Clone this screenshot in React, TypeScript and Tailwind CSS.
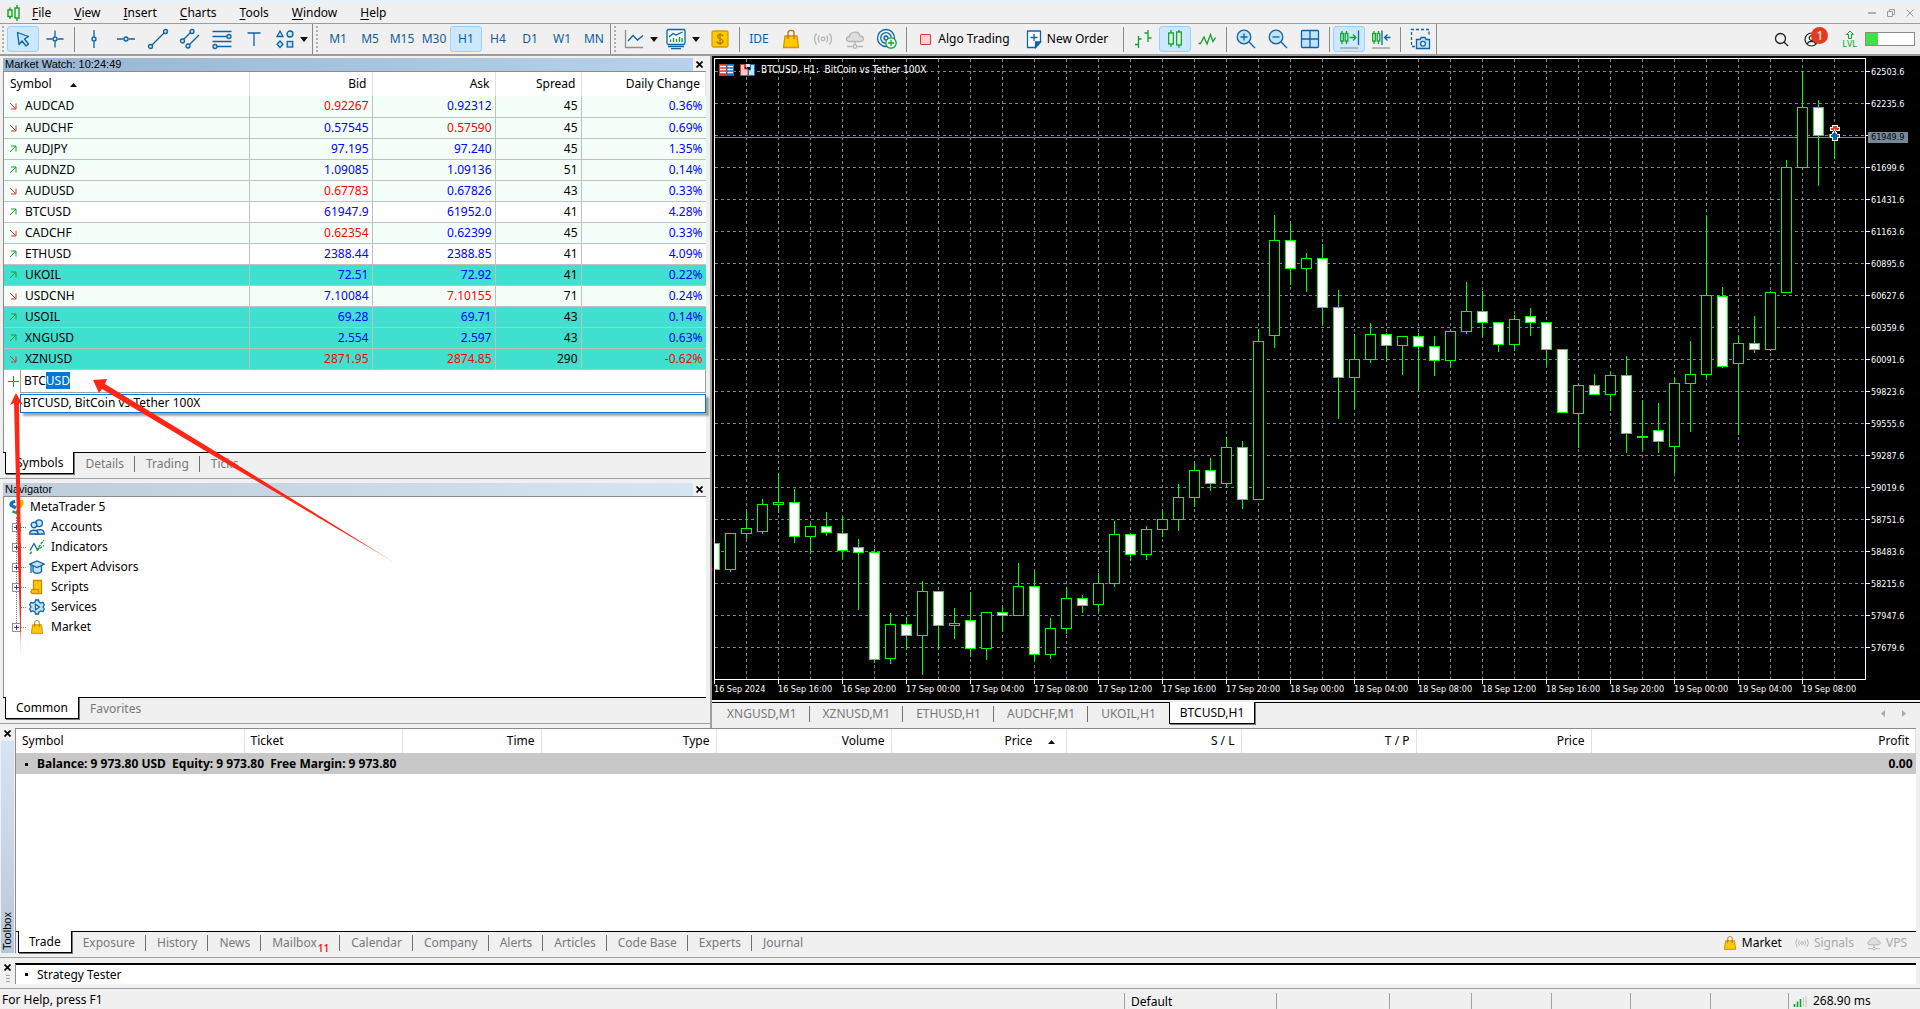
import { useEffect, useRef, type ReactNode } from "react";
import clsx from "clsx";

const BLUE = "#0f62a6";
const SKY = "#bfe4fc";
const GREEN = "#0fa32d";
const GRAY = "#b4b4b4";

/* ---------- icons ---------- */

const Icon = ({ children, size = 24, box = 24 }: { children: ReactNode; size?: number; box?: number }) => (
  <svg width={size} height={size} viewBox={`0 0 ${box} ${box}`} fill="none" stroke={BLUE} strokeWidth="1.3" className="shrink-0" aria-hidden="true">
    {children}
  </svg>
);

const CursorIcon = () => (
  <Icon><path d="M6.5 5.5 17.5 9.5 13.5 12 17.5 17 15 19 11 14 8 17.5Z" fill={SKY} strokeLinejoin="round" /></Icon>
);

const CrosshairIcon = () => (
  <Icon><path d="M12 3.5V9.5M12 14.5V20.5M3.5 12H9.5M14.5 12H20.5" /><circle cx="12" cy="12" r="2" fill={SKY} /></Icon>
);

const VLineIcon = () => (
  <Icon><path d="M12 3V9.5M12 14.5V21" /><circle cx="12" cy="12" r="2" fill={SKY} /></Icon>
);

const HLineIcon = () => (
  <Icon><path d="M3 12H9.5M14.5 12H21" /><circle cx="12" cy="12" r="2" fill={SKY} /></Icon>
);

const TrendIcon = () => (
  <Icon>
    <path d="M6 18 18 6" />
    <circle cx="4.5" cy="19.5" r="2" fill={SKY} /><circle cx="19.5" cy="4.5" r="2" fill={SKY} />
  </Icon>
);

const ChannelIcon = () => (
  <Icon>
    <path d="M5 13 13 5M11 18 21 8" />
    <circle cx="4.5" cy="14" r="2" fill={SKY} /><circle cx="14" cy="4.5" r="2" fill={SKY} /><circle cx="10" cy="19" r="2" fill={SKY} />
  </Icon>
);

const FiboIcon = () => (
  <Icon>
    <path d="M2.5 4.5H21.5M2.5 9.5H17M2.5 14.5H21.5M7 19.5H21.5" />
    <circle cx="19" cy="9.5" r="2" fill={SKY} /><circle cx="5" cy="19.5" r="2" fill={SKY} />
  </Icon>
);

const TextIcon = () => (
  <Icon><path d="M5.5 6H18.5M12 6V19" /></Icon>
);

const ShapesIcon = () => (
  <Icon>
    <path d="M7 4 10 9.5H4ZM7 14 10 17.3 7 20.5 4 17.3Z" fill={SKY} />
    <circle cx="17" cy="7" r="3" fill={SKY} /><rect x="14.2" y="14.5" width="5.5" height="5.5" fill={SKY} />
  </Icon>
);

const LineChartIcon = () => (
  <Icon><path d="M3.5 3V20.5H21" stroke="#8e8e8e" /><path d="M6 14 11 8.5 15.5 13 21 8.5" /></Icon>
);

const IndicatorWindowIcon = () => (
  <Icon>
    <rect x="3" y="2.5" width="18" height="15" rx="1.5" fill="#f2faff" />
    <path d="M5 10 9 6.5 12 8 18.5 5" />
    <path d="M6.5 15V12.5M9.5 15V11M12.5 15V12M15.5 15V10M18 15V11" stroke={GREEN} />
    <path d="M4 19.5H20M7 21.7H17" />
  </Icon>
);

const DollarIcon = () => (
  <Icon>
    <rect x="4" y="4" width="16" height="16" rx="1.5" fill="#ffc800" stroke="#d99a00" />
    <path d="M15 9C14.5 7 9.5 7 9.5 9.5 9.5 12 15 11.5 15 14.3 15 17 9.5 17 9 14.5M12 6V18" stroke="#b27700" />
  </Icon>
);

const BagIcon = ({ size = 24 }: { size?: number }) => (
  <Icon size={size}>
    <path d="M6 9H18L19.5 20.5H4.5Z" fill="#ffc800" stroke="#d39200" />
    <path d="M9 12V6C9 2.500 15 2.500 15 6V12" stroke="#b27700" />
  </Icon>
);

const SignalIcon = ({ size = 24 }: { size?: number }) => (
  <Icon size={size}>
    <g stroke={GRAY}>
      <circle cx="12" cy="12" r="1.8" />
      <path d="M8.5 8.5Q6 12 8.5 15.5M5.5 6.5Q1.5 12 5.5 17.5M15.5 8.5Q18 12 15.5 15.5M18.5 6.5Q22.5 12 18.5 17.5" />
    </g>
  </Icon>
);

const CloudIcon = ({ size = 24 }: { size?: number }) => (
  <Icon size={size}>
    <g stroke={GRAY}>
      <path d="M6.5 14.5C2.5 14.5 2.5 9.8 6.5 9.5 7 4 16 3.5 17 9 21.5 9 21.5 14.5 17.5 14.5Z" fill="#dedede" />
      <path d="M12 14.5V18M4 19.5H9.5M14.5 19.5H20" /><circle cx="12" cy="19.5" r="1.8" />
    </g>
  </Icon>
);

const CommunityIcon = () => (
  <Icon>
    <circle cx="11" cy="11" r="8.5" /><circle cx="11" cy="11" r="5.3" /><circle cx="11" cy="11" r="2" fill={SKY} />
    <circle cx="16" cy="16" r="5.2" fill="#fff" stroke={GREEN} />
    <path d="M12.8 16H19.2M16 12.8V19.2" stroke={GREEN} />
  </Icon>
);

const NewOrderIcon = () => (
  <Icon>
    <path d="M5.5 4H18.5V15L13.5 20.5H5.5Z" fill="#fff" strokeLinejoin="round" />
    <path d="M18.5 15H13.5V20.5Z" fill={BLUE} /><path d="M12 7V14M8.5 10.5H15.5" />
  </Icon>
);

const BarsIcon = () => (
  <Icon><path d="M7.5 9V21M4 17.5H7.5M7.5 12H10.5M17 3V15M13.5 6H17M17 11H20.5" stroke={GREEN} /></Icon>
);

const CandlesIcon = () => (
  <Icon>
    <path d="M8 3V6M8 17V20M16 3V5M16 18V21" stroke={GREEN} />
    <rect x="5.7" y="6" width="4.6" height="11" stroke={GREEN} fill="#eafbe9" /><rect x="13.7" y="5" width="4.6" height="13" stroke={GREEN} fill="#eafbe9" />
  </Icon>
);

const ZigzagIcon = () => (
  <Icon><path d="M3.500 16.500H5.500L9 10 12 17 15.500 7.500 18 14.500 20.500 10.500" stroke={GREEN} /></Icon>
);

const ZoomIcon = ({ plus }: { plus?: boolean }) => (
  <Icon>
    <circle cx="10" cy="10" r="6.8" fill={SKY} /><path d="M15 15 21 21" />
    <path d={plus ? "M6.5 10H13.5M10 6.5V13.5" : "M6.5 10H13.5"} />
  </Icon>
);

const TileIcon = () => (
  <Icon><rect x="3.5" y="3.5" width="17" height="17" rx="1" fill={SKY} /><path d="M12 3.5V20.5M3.5 12H20.5" /></Icon>
);

const MiniCandles = () => (
  <g stroke={GREEN}>
    <path d="M5 4V6.5M5 14V17M9.5 4V6.5M9.5 14V17" /><rect x="3.7" y="6.5" width="2.6" height="7.5" /><rect x="8.2" y="6.5" width="2.6" height="7.5" />
  </g>
);

const ScrollIcon = () => (
  <Icon>
    <MiniCandles />
    <path d="M12.5 10.5H18.5M16 7.5 19 10.5 16 13.5" stroke={GREEN} /><path d="M21.5 3.5V18" /><path d="M3 21H21" stroke="#9a9a9a" />
  </Icon>
);

const ShiftIcon = () => (
  <Icon>
    <MiniCandles />
    <path d="M13 3.5V18M21.5 10.5H16M18.5 7.5 15.5 10.5 18.5 13.5" /><path d="M3 21H21" stroke="#9a9a9a" />
  </Icon>
);

const CameraIcon = () => (
  <Icon>
    <path d="M7 19.5H3.5V2.5H21V9" strokeDasharray="3 2" />
    <path d="M8.5 12.5H12L13.2 10.5H17L18.2 12.5H21.5V21.5H8.5Z" fill={SKY} /><circle cx="15" cy="16.8" r="2.4" fill="#fff" />
  </Icon>
);

const UsersIcon = () => (
  <Icon size={16} box={16}>
    <circle cx="10" cy="4.2" r="3.4" fill={SKY} /><path d="M6 15C6 9.500 15 9 15.300 15Z" fill={SKY} />
    <circle cx="5" cy="6" r="2.800" fill={SKY} /><path d="M.7 15C.7 10 9 10 9.300 15Z" fill={SKY} />
  </Icon>
);

const IndicatorsIcon = () => (
  <Icon size={16} box={16}>
    <path d="M1 11.500 5 4.500 8.500 11 10 9" /><path d="M1 15 3 12.500M8 12 10 8 12.500 4 15 1M10.500 9.500 15 6.500" stroke={GREEN} strokeDasharray="3 1" />
  </Icon>
);

const ExpertIcon = () => (
  <Icon size={16} box={16}>
    <path d="M4 6V12.5C6 15 10.500 15 12.500 12.500V6" fill={SKY} /><path d="M.8 5.200 8 2 15.300 5.200 8 8.500Z" fill={SKY} /><path d="M2 6V14" />
  </Icon>
);

const ScriptIcon = () => (
  <Icon size={16} box={16}>
    <path d="M4.500 1.500H12.500V14.500H3.500C1.500 14.500 1.500 10.500 3.500 10.500H4.500Z" fill="#ffc800" stroke="#c98c00" /><path d="M4.500 10.500H9.500V14" stroke="#c98c00" />
  </Icon>
);

const GearIcon = () => (
  <Icon size={16} box={16}>
    <path d="M6.500 1H9.500L10 3 12 4 14 3.300 15.300 6 14 8 15.300 10 14 12.700 12 12 10 13 9.500 15H6.500L6 13 4 12 2 12.700.7 10 2 8 .7 6 2 3.300 4 4 6 3Z" fill={SKY} />
    <path d="M6.500 5.300V10.700L10.500 8Z" fill="#fff" />
  </Icon>
);

const LogoIcon = () => (
  <svg width="16" height="16" viewBox="0 0 16 16" className="shrink-0" aria-hidden="true">
    <path d="M7 1C3 1 0 4 2 7.500L7 10.500 9 7.500 5 5.500C5 4.500 6.500 4 7.500 4Z" fill="#1273c4" />
    <path d="M8 1H15C17 5 15 8.500 11 9.500L8 6.500 11.500 5Z" fill="#f5b800" />
    <path d="M9 10 12 10.500 9 15.500 4 13.500 5 11 8 12.500Z" fill="#18a83c" />
  </svg>
);

const Caret = () => (
  <svg width="8" height="5" viewBox="0 0 8 5" className="shrink-0" aria-hidden="true"><path d="M0 0H8L4 5Z" fill="#111" /></svg>
);

const SortMark = () => (
  <svg width="7" height="4" viewBox="0 0 7 4" className="inline-block align-top" aria-hidden="true"><path d="M0 4H7L3.500 0Z" fill="#111" /></svg>
);

/* ---------- top bars ---------- */

const menus = ["File", "View", "Insert", "Charts", "Tools", "Window", "Help"];

const MenuBar = () => (
  <header className="border-b border-[#9c9c9c] bg-[#f0f0f0]">
    <div className="h-[3px] bg-[#e8f3f9]" />
    <div className="flex h-5 items-center justify-between pl-[7px] pr-[6px]">
      <nav className="flex items-center">
        <svg width="14" height="16" viewBox="0 0 14 16" fill="none" stroke="#0aa51e" strokeWidth="1.400" className="mr-[11px]" aria-hidden="true">
          <path d="M3 2.500V5M3 11.500V14M10 0V3M10 13V16" /><rect x="1" y="5" width="4" height="6.500" /><rect x="8" y="3" width="4" height="10" />
        </svg>
        <div className="flex gap-[23px]">
          {menus.map((name) => (
            <button key={name} className="text-[12px]"><span className="underline underline-offset-2">{name[0]}</span>{name.slice(1)}</button>
          ))}
        </div>
      </nav>
      <div className="flex gap-[11px] text-[#9a9a9a]">
        <button aria-label="Minimize"><svg width="8" height="8" viewBox="0 0 8 8" stroke="currentColor"><path d="M0 4H8" strokeWidth="1.500" /></svg></button>
        <button aria-label="Restore"><svg width="8" height="8" viewBox="0 0 8 8" fill="none" stroke="currentColor"><path d="M.5 2.500H5.500V7.500H.5ZM2.500 2V.5H7.500V5.500H6" /></svg></button>
        <button aria-label="Close"><svg width="8" height="8" viewBox="0 0 8 8" stroke="currentColor"><path d="M.5.5 7.500 7.500M7.500.5.5 7.500" /></svg></button>
      </div>
    </div>
  </header>
);

const ToolButton = ({ label, active, children, className }: { label: string; active?: boolean; children: ReactNode; className?: string }) => (
  <button aria-label={label} className={clsx("flex h-[26px] shrink-0 items-center justify-center rounded-[3px] border", className ?? "w-[32px]", active ? "border-[#99d1ff] bg-[#cce8ff]" : "border-transparent")}>
    {children}
  </button>
);

const Separator = () => <span className="mx-[3px] h-[25px] w-px shrink-0 bg-[#8a8a8a]" />;
const Grip = () => <span className="h-[26px] w-0 shrink-0 border-l-2 border-dotted border-[#b0b0b0]" />;

const timeframes = ["M1", "M5", "M15", "M30", "H1", "H4", "D1", "W1", "MN"];

const Toolbar = () => (
  <div className="flex h-[32px] items-center border-b-2 border-[#9c9c9c] bg-[#f0f0f0] pl-[2px]">
    <Grip />
    <div className="flex items-center pl-[3px]">
      <ToolButton label="Cursor" active><CursorIcon /></ToolButton>
      <ToolButton label="Crosshair"><CrosshairIcon /></ToolButton>
      <Separator />
      <ToolButton label="Vertical line"><VLineIcon /></ToolButton>
      <ToolButton label="Horizontal line"><HLineIcon /></ToolButton>
      <ToolButton label="Trend line"><TrendIcon /></ToolButton>
      <ToolButton label="Channel"><ChannelIcon /></ToolButton>
      <ToolButton label="Fibonacci"><FiboIcon /></ToolButton>
      <ToolButton label="Text"><TextIcon /></ToolButton>
      <ToolButton label="Shapes" className="w-[40px] gap-[3px]"><ShapesIcon /><Caret /></ToolButton>
    </div>
    <span className="ml-[2px] h-[30px] w-px bg-[#8a8a8a]" />
    <span className="w-[3px]" />
    <Grip />
    <div className="flex items-center pl-[4px]">
      {timeframes.map((tf) => (
        <ToolButton key={tf} label={tf} active={tf === "H1"}><span className="text-[12px] text-[#0f5c9c]">{tf}</span></ToolButton>
      ))}
    </div>
    <span className="h-[30px] w-px bg-[#8a8a8a]" />
    <span className="w-[3px]" />
    <Grip />
    <div className="flex items-center pl-[3px]">
      <ToolButton label="Chart type" className="w-[41px] gap-[4px]"><LineChartIcon /><Caret /></ToolButton>
      <ToolButton label="Indicators" className="w-[44px] gap-[4px]"><IndicatorWindowIcon /><Caret /></ToolButton>
      <ToolButton label="Quotes" className="w-[32px]"><DollarIcon /></ToolButton>
      <Separator />
      <ToolButton label="IDE"><span className="text-[12px] text-[#0f5c9c]">IDE</span></ToolButton>
      <ToolButton label="Market"><BagIcon /></ToolButton>
      <ToolButton label="Signals"><SignalIcon /></ToolButton>
      <ToolButton label="VPS"><CloudIcon /></ToolButton>
      <ToolButton label="Community"><CommunityIcon /></ToolButton>
      <Separator />
      <ToolButton label="Algo Trading" className="w-[110px] gap-[7px]">
        <span className="size-[11px] rounded-[1px] border border-[#dc3b33] bg-[#ffcfcb]" />
        <span className="whitespace-nowrap text-[12px]">Algo Trading</span>
      </ToolButton>
      <ToolButton label="New Order" className="mr-[10px] w-[90px] gap-[1px]">
        <NewOrderIcon /><span className="whitespace-nowrap text-[12px]">New Order</span>
      </ToolButton>
      <Separator />
      <ToolButton label="Bar chart"><BarsIcon /></ToolButton>
      <ToolButton label="Candlesticks" active><CandlesIcon /></ToolButton>
      <ToolButton label="Line chart"><ZigzagIcon /></ToolButton>
      <Separator />
      <ToolButton label="Zoom in"><ZoomIcon plus /></ToolButton>
      <ToolButton label="Zoom out"><ZoomIcon /></ToolButton>
      <ToolButton label="Tile windows"><TileIcon /></ToolButton>
      <Separator />
      <ToolButton label="Auto scroll" active><ScrollIcon /></ToolButton>
      <ToolButton label="Chart shift"><ShiftIcon /></ToolButton>
      <Separator />
      <ToolButton label="Screenshot"><CameraIcon /></ToolButton>
    </div>
    <span className="h-[30px] w-px bg-[#8a8a8a]" />
    <div className="ml-auto flex items-center pr-[5px]">
      <button aria-label="Search" className="mr-[15px]">
        <svg width="15" height="15" viewBox="0 0 15 15" fill="none" stroke="#222" strokeWidth="1.300"><circle cx="6.500" cy="6.500" r="5" /><path d="M10 10 14 14" /></svg>
      </button>
      <button aria-label="Profile" className="relative mr-[14px] flex h-[22px] w-[24px] items-center">
        <svg width="15" height="15" viewBox="0 0 15 15" fill="none" stroke="#222" strokeWidth="1.200"><circle cx="7.500" cy="7.500" r="6.500" /><circle cx="7.500" cy="6" r="2.300" /><path d="M3.500 12C4 8.500 11 8.500 11.500 12" /></svg>
        <span className="absolute -top-px right-0 flex size-[17px] items-center justify-center rounded-full bg-[#e33b1e] text-[12px] leading-none text-white">1</span>
      </button>
      <button aria-label="Level" className="mr-[8px] flex flex-col items-center">
        <svg width="10" height="9" viewBox="0 0 10 9" fill="none" stroke={GREEN}><path d="M5 1 8.500 4.500H6.500V8.500H3.500V4.500H1.500Z" /></svg>
        <span className="text-[9px] leading-[9px] text-[#0fa32d]">LVL</span>
      </button>
      <div className="h-[14px] w-[50px] border border-[#8a8a8a] bg-white"><div className="h-full w-[12px] bg-[#43e043]" /></div>
    </div>
  </div>
);

/* ---------- docked panels ---------- */

const CloseButton = ({ label }: { label: string }) => (
  <button aria-label={label}>
    <svg width="7" height="7" viewBox="0 0 7 7" stroke="#000" strokeWidth="1.700" aria-hidden="true"><path d="M.5.5 6.500 6.500M6.500.5.5 6.500" /></svg>
  </button>
);

const PanelTitle = ({ title, active }: { title: string; active?: boolean }) => (
  <div className="flex h-[14px] items-center">
    <h2 className={clsx("h-[13px] flex-1 bg-linear-to-r pl-[2px] font-['Liberation_Sans',sans-serif] text-[11px] leading-[13px]", active ? "from-[#99b4d1] to-[#b9d1ea]" : "from-[#bfcddb] to-[#d7e4f2]")}>{title}</h2>
    <span className="flex w-[13px] justify-center"><CloseButton label={`Close ${title}`} /></span>
  </div>
);

const Tabs = ({ tabs, active, wide, children }: { tabs: string[]; active: string; wide?: boolean; children?: ReactNode }) => (
  <div className="flex h-[22px] shrink-0 border-t border-black bg-[#f0f0f0] pl-[2px]">
    {tabs.map((tab, i) => (
      <button
        key={tab}
        className={clsx(
          "relative flex items-center text-[12px]",
          tab === active ? "-mt-px h-[22px] border-x border-b border-black bg-white px-[10px] shadow-[1px_1px_0_#777]" : "text-[#787878]",
          tab !== active && (wide ? "px-[13px]" : "px-[11px]")
        )}
      >
        {tab}
        {tab === "Mailbox" && <sub className="ml-px mt-[6px] text-[10px] font-semibold leading-none text-[#f01818]">11</sub>}
        {tab !== active && i < tabs.length - 1 && tabs[i + 1] !== active && <span className="absolute right-0 top-[3px] h-[16px] w-px bg-[#707070]" />}
      </button>
    ))}
    {children}
  </div>
);

type Quote = [symbol: string, up: boolean, bid: string, ask: string, spread: string, change: string, colors: string];

// colors: bid / ask / change, r = red, b = blue
const quotes: Quote[] = [
  ["AUDCAD", false, "0.92267", "0.92312", "45", "0.36%", "rbb"],
  ["AUDCHF", false, "0.57545", "0.57590", "45", "0.69%", "brb"],
  ["AUDJPY", true, "97.195", "97.240", "45", "1.35%", "bbb"],
  ["AUDNZD", true, "1.09085", "1.09136", "51", "0.14%", "bbb"],
  ["AUDUSD", false, "0.67783", "0.67826", "43", "0.33%", "rbb"],
  ["BTCUSD", true, "61947.9", "61952.0", "41", "4.28%", "bbb"],
  ["CADCHF", false, "0.62354", "0.62399", "45", "0.33%", "rbb"],
  ["ETHUSD", true, "2388.44", "2388.85", "41", "4.09%", "bbb"],
  ["UKOIL", true, "72.51", "72.92", "41", "0.22%", "bbb"],
  ["USDCNH", false, "7.10084", "7.10155", "71", "0.24%", "brb"],
  ["USOIL", true, "69.28", "69.71", "43", "0.14%", "bbb"],
  ["XNGUSD", true, "2.554", "2.597", "43", "0.63%", "bbb"],
  ["XZNUSD", false, "2871.95", "2874.85", "290", "-0.62%", "rrr"],
];
const turquoise = ["UKOIL", "USOIL", "XNGUSD", "XZNUSD"];
const plain = ["BTCUSD", "ETHUSD"];

const tone = (c: string) => (c === "r" ? "text-[#f00]" : "text-[#00f]");

const Direction = ({ up }: { up: boolean }) => (
  <svg width="8" height="8" viewBox="0 0 8 8" fill="none" stroke={up ? GREEN : "#d8352c"} className="shrink-0" aria-hidden="true">
    <path d={up ? "M1 7 7 1M2 1H7V6.500" : "M1 1 7 7M2 7H7V1.500"} />
  </svg>
);

const MarketWatch = () => {
  const input = useRef<HTMLInputElement>(null);

  useEffect(() => {
    input.current?.focus();
    input.current?.setSelectionRange(3, 6);
  }, []);

  return (
    <section className="pl-[3px] pr-[4px] pt-[1px]">
      <PanelTitle title="Market Watch: 10:24:49" active />
      <div className="h-[381px] border-l border-t border-[#8c8c8c] bg-white">
        <table className="w-full table-fixed border-collapse text-[12px]">
          <thead>
            <tr className="h-[24px] text-right">
              <th className="w-[245px] border-r border-[#e2e2e2] p-0 pl-[6px] text-left font-normal">Symbol <span className="ml-[15px] inline-block align-middle leading-[4px]"><SortMark /></span></th>
              <th className="w-[123px] border-r border-[#e2e2e2] p-0 pr-[5px] font-normal">Bid</th>
              <th className="w-[123px] border-r border-[#e2e2e2] p-0 pr-[5px] font-normal">Ask</th>
              <th className="w-[86px] border-r border-[#e2e2e2] p-0 pr-[5px] font-normal">Spread</th>
              <th className="border-r border-[#e2e2e2] p-0 pr-[5px] font-normal">Daily Change</th>
            </tr>
          </thead>
          <tbody>
            {quotes.map(([symbol, up, bid, ask, spread, change, colors]) => (
              <tr
                key={symbol}
                className={clsx("h-[21px] border-b border-[#c0c0c0] text-right", turquoise.includes(symbol) ? "bg-[#40e0d0]" : plain.includes(symbol) ? "bg-white" : "bg-[#f5fffa]")}
              >
                <td className="border-r border-[#c0c0c0] p-0"><span className="flex items-center gap-[8px] pl-[5px] leading-[20px]"><Direction up={up} />{symbol}</span></td>
                <td className={clsx("border-r border-[#c0c0c0] p-0 pr-[3px] leading-[20px]", tone(colors[0]))}>{bid}</td>
                <td className={clsx("border-r border-[#c0c0c0] p-0 pr-[3px] leading-[20px]", tone(colors[1]))}>{ask}</td>
                <td className="border-r border-[#c0c0c0] p-0 pr-[3px] leading-[20px]">{spread}</td>
                <td className={clsx("p-0 pr-[3px] leading-[20px]", tone(colors[2]))}>{change}</td>
              </tr>
            ))}
          </tbody>
        </table>
        <div className="relative flex h-[23px] items-center">
          <svg width="16" height="11" viewBox="0 0 16 11" stroke={GREEN} className="shrink-0" aria-hidden="true"><path d="M4 5.500H15M9.500 0V11" /></svg>
          <input
            ref={input}
            aria-label="Add symbol"
            defaultValue="BTCUSD"
            className="h-full flex-1 border border-t-0 border-[#a0a0a0] bg-white pl-[3px] text-[12px] caret-transparent outline-none selection:bg-[#0078d7] selection:text-white"
          />
          <div className="absolute left-[16px] right-0 top-[24px] flex h-[19px] items-center border border-[#0078d7] bg-white pl-[2px] text-[12px] shadow-[3px_3px_2px_rgba(0,0,0,0.35)]">
            BTCUSD, BitCoin vs Tether 100X
          </div>
        </div>
      </div>
      <Tabs tabs={["Symbols", "Details", "Trading", "Ticks"]} active="Symbols" />
    </section>
  );
};

const tree = [
  { name: "Accounts", icon: <UsersIcon /> },
  { name: "Indicators", icon: <IndicatorsIcon /> },
  { name: "Expert Advisors", icon: <ExpertIcon /> },
  { name: "Scripts", icon: <ScriptIcon /> },
  { name: "Services", icon: <GearIcon />, leaf: true },
  { name: "Market", icon: <BagIcon size={18} /> },
];

const Navigator = () => (
  <section className="mb-[4px] mt-[4px] flex flex-1 flex-col border-y border-[#a0a0a0] pb-[4px] pl-[3px] pr-[4px] pt-[3px]">
    <PanelTitle title="Navigator" />
    <div className="flex-1 border-l border-t border-[#8c8c8c] bg-white text-[12px]">
      <div className="flex h-[20px] items-center gap-[6px] pl-[4px]"><LogoIcon />MetaTrader 5</div>
      <ul className="relative">
        <li aria-hidden="true" className="absolute bottom-[10px] left-[12px] top-0 border-l border-dotted border-[#808080]" />
        {tree.map(({ name, icon, leaf }) => (
          <li key={name} className="relative flex h-[20px] items-center pl-[8px]">
            {leaf ? (
              <span className="w-[9px]" />
            ) : (
              <button aria-label={`Expand ${name}`}>
                <svg width="9" height="9" viewBox="0 0 9 9" fill="#fff" stroke="#909090" className="block"><rect x=".5" y=".5" width="8" height="8" /><path d="M2 4.500H7M4.500 2V7" stroke="#27408b" /></svg>
              </button>
            )}
            <span className="mr-[2px] w-[5px] border-t border-dotted border-[#808080]" />
            <span className="flex w-[18px] justify-center">{icon}</span>
            <span className="ml-[5px]">{name}</span>
          </li>
        ))}
      </ul>
    </div>
    <Tabs tabs={["Common", "Favorites"]} active="Common" />
  </section>
);

/* ---------- chart ---------- */

// one entry an hour: high, body top, body bottom, low, filled
type Candle = [number, number, number, number, 0 | 1];

const candles: Candle[] = [
  [485, 485, 511, 511, 1], [474, 475, 511, 513, 0], [452, 470, 475, 480, 0], [440, 446, 473, 475, 0],
  [414, 444, 446, 454, 0], [430, 444, 478, 484, 1], [464, 468, 478, 495, 0], [453, 468, 474, 477, 1],
  [457, 475, 492, 500, 1], [480, 489, 494, 551, 1], [490, 494, 601, 604, 1], [554, 566, 600, 605, 0],
  [558, 566, 577, 591, 1], [522, 533, 577, 616, 0], [532, 533, 567, 591, 1], [549, 565, 567, 580, 0],
  [533, 562, 590, 598, 1], [553, 554, 590, 601, 0], [548, 554, 557, 573, 1], [504, 528, 557, 557, 0],
  [512, 528, 596, 602, 1], [559, 570, 596, 600, 0], [528, 540, 570, 575, 0], [536, 540, 547, 554, 1],
  [514, 525, 546, 553, 0], [462, 476, 525, 528, 0], [475, 476, 496, 502, 1], [467, 471, 496, 501, 0],
  [452, 461, 471, 478, 0], [425, 439, 461, 472, 0], [403, 412, 439, 448, 0], [399, 412, 425, 432, 1],
  [378, 389, 425, 429, 0], [382, 389, 441, 450, 1], [270, 283, 441, 441, 0], [156, 182, 277, 289, 0],
  [165, 182, 210, 226, 1], [194, 200, 210, 233, 0], [185, 200, 249, 266, 1], [231, 249, 319, 360, 1],
  [275, 301, 319, 350, 0], [264, 276, 301, 304, 0], [274, 276, 287, 302, 1], [277, 278, 287, 316, 0],
  [274, 278, 288, 331, 1], [277, 288, 302, 317, 1], [270, 273, 302, 308, 0], [223, 253, 273, 275, 0],
  [232, 253, 264, 278, 1], [263, 264, 286, 293, 1], [256, 261, 286, 292, 0], [249, 258, 264, 277, 1],
  [264, 264, 291, 306, 1], [291, 291, 354, 354, 1], [324, 327, 355, 389, 0], [315, 327, 336, 336, 1],
  [313, 317, 336, 352, 0], [297, 317, 375, 394, 1], [341, 378, 379, 392, 0], [344, 372, 383, 394, 1],
  [319, 325, 388, 414, 0], [282, 316, 325, 373, 0], [156, 237, 316, 319, 0], [228, 238, 308, 309, 1],
  [277, 285, 305, 376, 0], [257, 285, 291, 294, 1], [232, 234, 291, 292, 0], [101, 109, 234, 234, 0],
  [12, 49, 109, 110, 0], [41, 49, 77, 127, 1], [76, 76, 79, 100, 0],
];

const hours = [
  "16 Sep 2024", "16 Sep 16:00", "16 Sep 20:00", "17 Sep 00:00", "17 Sep 04:00", "17 Sep 08:00",
  "17 Sep 12:00", "17 Sep 16:00", "17 Sep 20:00", "18 Sep 00:00", "18 Sep 04:00", "18 Sep 08:00",
  "18 Sep 12:00", "18 Sep 16:00", "18 Sep 20:00", "19 Sep 00:00", "19 Sep 04:00", "19 Sep 08:00",
];
const prices = Array.from({ length: 19 }, (_, i) => (62503.6 - i * 268).toFixed(1));

const Plot = () => (
  <svg className="absolute inset-0 h-full w-full" shapeRendering="crispEdges" role="img" aria-label="BTCUSD hourly candles">
    <g stroke="#778899" strokeDasharray="3 3">
      {Array.from({ length: 60 }, (_, i) => <line key={i} x1={31.5 + i * 32} x2={31.5 + i * 32} y1="0" y2="100%" />)}
      {prices.map((p, i) => <line key={p} x1="0" x2="100%" y1={12.5 + i * 32} y2={12.5 + i * 32} />)}
    </g>
    <line x1="0" x2="100%" y1="78.5" y2="78.5" stroke="#778899" />
    {candles.map(([high, top, bottom, low, filled], i) => {
      const x = i * 16 - 0.5;
      return (
        <g key={i} stroke="#0f0">
          <line x1={x} x2={x} y1={high} y2={low} />
          <rect x={x - 5} y={top - 0.5} width="10" height={bottom - top} fill={filled ? "#fff" : "#000"} />
        </g>
      );
    })}
    <g stroke="#fff" transform="translate(1119 0)">
      <path d="M-2 66H3V68H5V71H3L.5 74-2 71H-4V68H-2Z" fill="#e33b1e" />
      <path d="M.5 71 3 75H5V78H3V81H-2V78H-4V75H-2Z" fill="#0f62a6" />
    </g>
  </svg>
);

const Chart = () => (
  <section className="flex min-w-0 flex-1 flex-col border-l-2 border-[#a0a0a0]">
    <div className="flex min-h-0 flex-1 bg-black pl-[2px] pr-[1px] pt-[2px] font-['DejaVu_Sans_Condensed','DejaVu_Sans',sans-serif] text-[9px] text-white">
      <div className="flex min-w-0 flex-1 flex-col">
        <div className="relative flex-1 overflow-hidden border border-white">
          <Plot />
          <div className="relative flex items-center pl-[4px] pt-[3px]">
            <svg width="15" height="12" viewBox="0 0 15 12" aria-hidden="true">
              <path d="M0 0H8V12H0Z" fill="#e0352c" /><path d="M7.500 0H15V12H7.500Z" fill="#1273c4" /><path d="M1 2.500H7M1 5.500H7M1 8.500H7M8.500 2.500H14M8.500 5.500H14M8.500 8.500H14" stroke="#fff" strokeWidth="1.500" />
            </svg>
            <svg width="15" height="12" viewBox="0 0 15 12" className="ml-[6px]" aria-hidden="true">
              <path d="M.5.5H4.500V5H8V11.500H.5Z" fill="#ffc9c4" stroke="#e0352c" /><path d="M10.500.5H14.500V11.500H8.500V6H10.500Z" fill="#bfe4fc" stroke="#1273c4" /><path d="M5.500 0H10V3H5.500Z" fill="#ddd" />
            </svg>
            <h1 className="ml-[6px] whitespace-pre text-[10px]">BTCUSD, H1:  BitCoin vs Tether 100X</h1>
          </div>
        </div>
        <div className="flex h-[20px] overflow-hidden">
          {hours.map((h) => (
            <div key={h} className="w-[64px] shrink-0 whitespace-nowrap">
              <div className="h-[4px] border-l border-white" />
              <div className="leading-[10px]">{h}</div>
            </div>
          ))}
        </div>
      </div>
      <div className="relative w-[53px] shrink-0 overflow-hidden">
        {prices.map((p) => (
          <div key={p} className="flex h-[32px] items-start">
            <div className="flex h-[27px] items-center"><span className="mr-px h-px w-[4px] bg-white" />{p !== "61967.6" && p}</div>
          </div>
        ))}
        <div className="absolute left-[2px] top-[74px] h-[11px] w-[40px] bg-[#778899] pl-[3px] leading-[11px] text-black">61949.9</div>
      </div>
    </div>
    <div className="flex h-[28px] flex-col bg-[#f0f0f0] pt-[2px]">
      <Tabs tabs={["XNGUSD,M1", "XZNUSD,M1", "ETHUSD,H1", "AUDCHF,M1", "UKOIL,H1", "BTCUSD,H1"]} active="BTCUSD,H1" wide>
        <div className="ml-auto flex items-center gap-[17px] pr-[14px]">
          <button aria-label="Scroll left"><svg width="4" height="7" viewBox="0 0 4 7"><path d="M4 0V7L0 3.500Z" fill="#aaa" /></svg></button>
          <button aria-label="Scroll right"><svg width="4" height="7" viewBox="0 0 4 7"><path d="M0 0V7L4 3.500Z" fill="#aaa" /></svg></button>
        </div>
      </Tabs>
    </div>
  </section>
);

/* ---------- bottom ---------- */

const toolboxTabs = ["Trade", "Exposure", "History", "News", "Mailbox", "Calendar", "Company", "Alerts", "Articles", "Code Base", "Experts", "Journal"];

const Bullet = () => <span className="mr-[9px] inline-block size-[3px] shrink-0 bg-black align-middle" />;

const Toolbox = () => (
  <section className="flex h-[230px] border-b border-[#a0a0a0] pb-[4px] pr-[4px]">
    <div className="flex w-[15px] flex-col items-center pt-[2px]">
      <CloseButton label="Close Toolbox" />
      <h2 className="mt-[4px] flex w-[13px] flex-1 rotate-180 items-center bg-linear-to-t from-[#d7e4f2] to-[#b8c8d9] pt-[3px] font-['Liberation_Sans',sans-serif] text-[11px] leading-[13px] [writing-mode:vertical-rl]">Toolbox</h2>
    </div>
    <div className="flex flex-1 flex-col border-l border-t border-[#8c8c8c] bg-white">
      <table className="w-full table-fixed border-collapse text-[12px]">
        <thead>
          <tr className="h-[24px] text-right [&>th]:border-r [&>th]:border-[#e2e2e2] [&>th]:p-0 [&>th]:px-[6px] [&>th]:font-normal">
            <th className="w-[228px] text-left">Symbol</th>
            <th className="w-[158px] text-left">Ticket</th>
            <th className="w-[139px]">Time</th>
            <th className="w-[175px]">Type</th>
            <th className="w-[175px]">Volume</th>
            <th className="w-[175px]">Price <span className="ml-[12px] mr-[5px] inline-block align-middle leading-[4px]"><SortMark /></span></th>
            <th className="w-[175px]">S / L</th>
            <th className="w-[175px]">T / P</th>
            <th className="w-[175px]">Price</th>
            <th>Profit</th>
          </tr>
        </thead>
        <tbody>
          <tr className="h-[21px] bg-[#c8c8c8] font-bold">
            <td colSpan={9} className="p-0 pl-[9px]"><Bullet /><span className="whitespace-pre">Balance: 9 973.80 USD  Equity: 9 973.80  Free Margin: 9 973.80</span></td>
            <td className="p-0 pr-[3px] text-right">0.00</td>
          </tr>
        </tbody>
      </table>
      <div className="flex-1" />
      <Tabs tabs={toolboxTabs} active="Trade">
        <div className="ml-auto flex items-center gap-[11px] pr-[9px] text-[12px] text-[#a8a8a8]">
          <button className="flex items-center gap-[3px] text-black"><BagIcon size={18} />Market</button>
          <button className="flex items-center gap-[3px]"><SignalIcon size={18} />Signals</button>
          <button className="flex items-center gap-[3px]"><CloudIcon size={18} />VPS</button>
        </div>
      </Tabs>
    </div>
  </section>
);

const StrategyTester = () => (
  <section className="flex h-[31px] border-b border-[#a0a0a0] pb-[4px] pr-[4px] pt-[5px]">
    <div className="flex w-[15px] flex-col items-center gap-[4px] pt-[1px]">
      <CloseButton label="Close Strategy Tester" />
      <span className="h-[8px] w-[4px] bg-[repeating-linear-gradient(#a0a0a0_0_1px,transparent_1px_3px)]" />
    </div>
    <div className="flex flex-1 items-center border-l border-t-2 border-l-[#8c8c8c] border-t-black bg-white pl-[9px] text-[12px]">
      <Bullet />Strategy Tester
    </div>
  </section>
);

const StatusBar = () => (
  <footer className="flex h-[20px] items-end pl-[2px] text-[12px]">
    <span className="flex-1 leading-[18px]">For Help, press F1</span>
    <span className="h-[16px] w-[152px] border-l border-[#a0a0a0] pl-[6px] leading-[18px]">Default</span>
    <span className="h-[16px] w-[113px] border-l border-[#a0a0a0]" />
    <span className="h-[16px] w-[82px] border-l border-[#a0a0a0]" />
    <span className="h-[16px] w-[80px] border-l border-[#a0a0a0]" />
    <span className="h-[16px] w-[79px] border-l border-[#a0a0a0]" />
    <span className="h-[16px] w-[80px] border-l border-[#a0a0a0]" />
    <span className="h-[16px] w-[78px] border-l border-[#a0a0a0]" />
    <span className="flex h-[16px] w-[132px] items-center gap-[6px] border-l border-[#a0a0a0] pl-[4px] leading-[18px]">
      <svg width="14" height="11" viewBox="0 0 14 11" aria-hidden="true"><path d="M1.500 8V11M4.500 5.500V11M7.500 3V11" stroke={GREEN} strokeWidth="1.600" /><path d="M10.500 1V11M13 0V11" stroke="#d0d0d0" strokeWidth="1.400" /></svg>
      268.90 ms
    </span>
  </footer>
);

/* red pointers drawn over the market watch */
const Pointers = () => (
  <svg className="pointer-events-none absolute left-0 top-0" width="420" height="680" viewBox="0 0 420 680" aria-hidden="true">
    <defs>
      <linearGradient id="fadeLong" gradientUnits="userSpaceOnUse" x1="93" y1="380" x2="397" y2="564">
        <stop offset="0.850" stopColor="#ff2616" /><stop offset="1" stopColor="#ff2616" stopOpacity="0.400" />
      </linearGradient>
      <linearGradient id="fadeShort" gradientUnits="userSpaceOnUse" x1="16" y1="393" x2="21" y2="656">
        <stop offset="0.850" stopColor="#ff2616" /><stop offset="1" stopColor="#ff2616" stopOpacity="0.300" />
      </linearGradient>
    </defs>
    <path d="M93 380 107 379 105 384 218 453 397 564 214 456 102 389 99 393Z" fill="url(#fadeLong)" />
    <path d="M16 393 23 405 19 403 21 560 21 656 18 560 14 403 10 405Z" fill="url(#fadeShort)" />
  </svg>
);

export default function App() {
  return (
    <div className="relative flex h-screen flex-col overflow-hidden bg-[#f0f0f0] font-['Noto_Sans','Open_Sans',sans-serif] text-[12px] leading-[16px] text-black">
      <MenuBar />
      <Toolbar />
      <main className="flex min-h-0 flex-1">
        <div className="flex w-[710px] shrink-0 flex-col">
          <MarketWatch />
          <Navigator />
        </div>
        <Chart />
      </main>
      <Toolbox />
      <StrategyTester />
      <StatusBar />
      <Pointers />
    </div>
  );
}
